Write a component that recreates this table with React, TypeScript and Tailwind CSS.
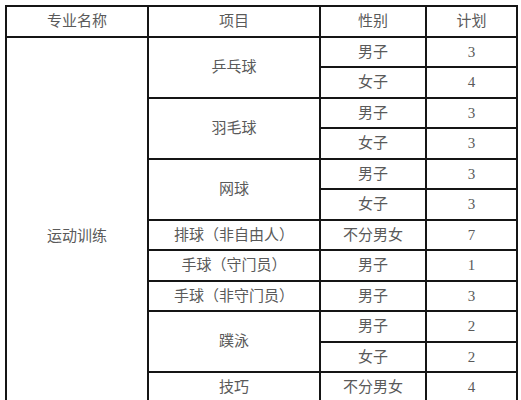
const rows: { item?: string; span?: number; sex: string; plan: string }[] = [
  { item: "乒乓球", span: 2, sex: "男子", plan: "3" },
  { sex: "女子", plan: "4" },
  { item: "羽毛球", span: 2, sex: "男子", plan: "3" },
  { sex: "女子", plan: "3" },
  { item: "网球", span: 2, sex: "男子", plan: "3" },
  { sex: "女子", plan: "3" },
  { item: "排球（非自由人）", span: 1, sex: "不分男女", plan: "7" },
  { item: "手球（守门员）", span: 1, sex: "男子", plan: "1" },
  { item: "手球（非守门员）", span: 1, sex: "男子", plan: "3" },
  { item: "蹼泳", span: 2, sex: "男子", plan: "2" },
  { sex: "女子", plan: "2" },
  { item: "技巧", span: 1, sex: "不分男女", plan: "4" },
  { item: "武术套路", span: 1, sex: "不分男女", plan: "2" },
];

const cell =
  "flex items-center justify-center bg-white text-[15px] leading-none text-[#5a5a5a]";

export default function App() {
  return (
    <div className="min-h-screen bg-white pl-[5px] pt-[5px] [font-family:'Liberation_Serif','Noto_Sans_CJK_SC',serif]">
      <div className="grid w-[513px] grid-cols-[140px_170px_104px_89px] grid-rows-[29px_28px_29px_28px_29px_28px_29px_28px_29px_28px_29px_28px_29px_28px] gap-[2px] bg-[#151515] p-[2px]">
        <div className={cell}>专业名称</div>
        <div className={cell}>项目</div>
        <div className={cell}>性别</div>
        <div className={cell}>计划</div>
        <div className={`${cell} row-span-13 pt-[2px]`}>运动训练</div>
        {rows.map((r, i) => (
          <Row key={i} {...r} />
        ))}
      </div>
    </div>
  );
}

function Row({
  item,
  span,
  sex,
  plan,
}: {
  item?: string;
  span?: number;
  sex: string;
  plan: string;
}) {
  return (
    <>
      {item && (
        <div className={`${cell} ${span === 2 ? "row-span-2" : ""}`}>
          {item}
        </div>
      )}
      <div className={cell}>{sex}</div>
      <div className={cell}>{plan}</div>
    </>
  );
}
